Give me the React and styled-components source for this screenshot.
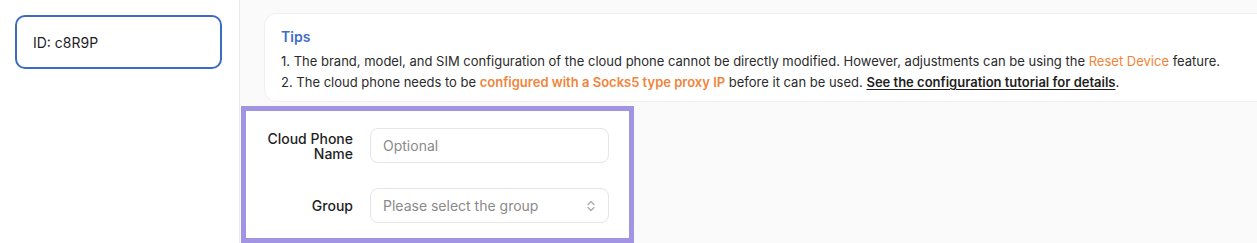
import React from "react";
import styled, { createGlobalStyle } from "styled-components";

const Global = createGlobalStyle`
  html, body { margin: 0; padding: 0; background: #ffffff; }
  body { font-family: Inter, "Noto Sans", Arial, sans-serif; -webkit-font-smoothing: antialiased; }
  * { box-sizing: border-box; }
`;

const Page = styled.div`
  display: flex;
  height: 243px;
  width: 1257px;
  overflow: hidden;
`;

const Sidebar = styled.aside`
  width: 240px;
  flex: 0 0 240px;
  background: #ffffff;
  border-right: 1px solid #ebebeb;
  padding: 15px 17px 0 15px;
`;

const IdCard = styled.div`
  height: 54px;
  width: 207px;
  border: 2px solid #3c6cc2;
  border-radius: 10px;
  display: flex;
  align-items: center;
  padding-left: 16px;
  font-size: 14px;
  color: #1f1f1f;
`;

const Main = styled.main`
  flex: 1;
  min-width: 0;
  background: #fafafa;
  display: flex;
  flex-direction: column;
  align-items: flex-start;
  overflow: hidden;
`;

const TipsCard = styled.section`
  margin: 13px -40px 4px 24px;
  align-self: stretch;
  background: #ffffff;
  border: 1px solid #f0f0f0;
  border-radius: 12px;
  padding: 13px 16px 8px;
`;

const TipsTitle = styled.div`
  font-size: 14px;
  font-weight: 600;
  line-height: 20px;
  color: #3d6dc9;
  margin-bottom: 4px;
`;

const TipLine = styled.div`
  font-size: 13px;
  line-height: 21px;
  color: #2b2b2b;
  white-space: nowrap;
`;

const Accent = styled.span`
  color: #f0843a;
  font-weight: ${(p) => (p.$bold ? 600 : 400)};
`;

const Link = styled.a`
  color: #1f1f1f;
  font-weight: 600;
  text-decoration: underline;
  text-underline-offset: 2px;
`;

const Form = styled.form`
  margin-left: 1px;
  width: 393px;
  border: 5px solid #a294e3;
  background: #ffffff;
  padding: 17px 20px 15px 0;
  display: flex;
  flex-direction: column;
  gap: 25px;
`;

const Row = styled.div`
  display: flex;
  align-items: center;
  gap: 17px;
`;

const Label = styled.label`
  width: 107px;
  flex: 0 0 107px;
  text-align: right;
  font-size: 14px;
  font-weight: 500;
  line-height: 15px;
  color: #1f1f1f;
  padding-left: 16px;
`;

const Field = styled.div`
  flex: 1;
  min-width: 0;
  height: 35px;
  border: 1px solid #e6e6e6;
  border-radius: 8px;
  display: flex;
  align-items: center;
  padding: 0 12px;
  font-size: 14px;
  color: #8a8a8a;
  background: #ffffff;
`;

const Input = styled.input`
  border: none;
  outline: none;
  flex: 1;
  min-width: 0;
  width: 100%;
  font: inherit;
  padding: 0;
  color: #1f1f1f;
  background: transparent;
  &::placeholder { color: #8a8a8a; }
`;

const SelectText = styled.span`
  flex: 1;
`;

const Chevrons = () => (
  <svg width="10" height="12" viewBox="0 0 10 12" fill="none" stroke="#a8a8a8" strokeWidth="1.2" strokeLinecap="round" strokeLinejoin="round">
    <path d="M2 4.5 L5 1.5 L8 4.5" />
    <path d="M2 7.5 L5 10.5 L8 7.5" />
  </svg>
);

export default function App() {
  return (
    <>
      <Global />
      <Page>
        <Sidebar>
          <IdCard>ID: c8R9P</IdCard>
        </Sidebar>
        <Main>
          <TipsCard>
            <TipsTitle>Tips</TipsTitle>
            <TipLine>
              1. The brand, model, and SIM configuration of the cloud phone cannot be directly modified. However, adjustments can be using the{" "}
              <Accent>Reset Device</Accent> feature.
            </TipLine>
            <TipLine>
              2. The cloud phone needs to be <Accent $bold>configured with a Socks5 type proxy IP</Accent> before it can be used.{" "}
              <Link>See the configuration tutorial for details</Link>.
            </TipLine>
          </TipsCard>
          <Form>
            <Row>
              <Label>Cloud Phone Name</Label>
              <Field>
                <Input placeholder="Optional" />
              </Field>
            </Row>
            <Row>
              <Label>Group</Label>
              <Field>
                <SelectText>Please select the group</SelectText>
                <Chevrons />
              </Field>
            </Row>
          </Form>
        </Main>
      </Page>
    </>
  );
}
